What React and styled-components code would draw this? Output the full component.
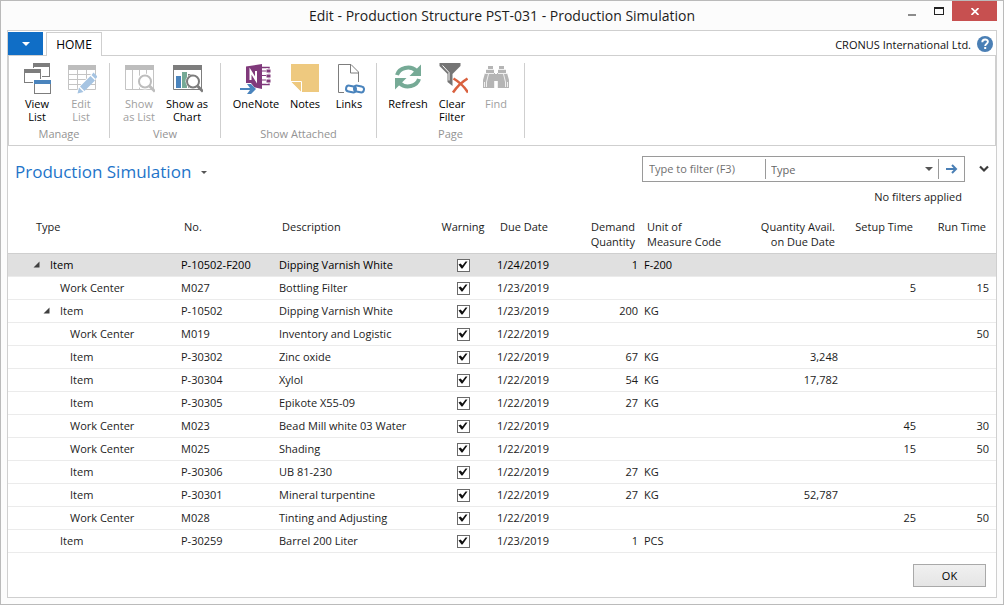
import React from "react";
import styled, { createGlobalStyle } from "styled-components";

const GlobalStyle = createGlobalStyle`
  * { box-sizing: border-box; }
  body {
    margin: 0;
    background: #fcfcfc;
    color: #1c1c1c;
    font: 11px/15px "Open Sans", "Noto Sans", sans-serif;
  }
  button, input, select { font: inherit; color: inherit; margin: 0; }
`;

const Window = styled.div`
  min-height: 100vh;
  display: flex;
  flex-direction: column;
  padding: 0 6px 6px;
  border: 1px solid #bababa;
`;

const TitleBar = styled.header`
  display: grid;
  grid-template-columns: 1fr auto 1fr;
  height: 29px;
  flex: none;
`;

const WindowTitle = styled.h1`
  grid-column: 2;
  margin: 0;
  font-size: 14px;
  line-height: 29px;
  font-weight: 400;
`;

const WindowControls = styled.div`
  display: flex;
  justify-content: flex-end;
  align-items: flex-start;
`;

const ControlButton = styled.button`
  width: ${(p) => (p.$close ? 45 : 27)}px;
  height: 20px;
  padding: 0;
  border: 0;
  display: grid;
  place-items: center;
  background: ${(p) => (p.$close ? "#c75050" : "transparent")};
`;

const Pane = styled.div`
  flex: 1;
  display: flex;
  flex-direction: column;
  border: 1px solid #cfcfcf;
  background: #fff;
`;

const TabBar = styled.nav`
  display: flex;
  align-items: stretch;
  height: 24px;
  padding-top: 1px;
`;

const AppMenuButton = styled.button`
  width: 35px;
  height: 23px;
  padding: 0;
  border: 0;
  display: grid;
  place-items: center;
  background: #106ec6;
`;

const Tab = styled.button`
  width: 56px;
  margin: 0 0 -1px 3px;
  padding: 0;
  border: 1px solid #cfcfcf;
  border-bottom: 0;
  background: #fff;
  color: #000;
  font-size: 12px;
  z-index: 1;
`;

const Company = styled.div`
  margin-left: auto;
  padding: 1px 3px 0 0;
  display: flex;
  align-items: center;
  gap: 6px;
  color: #111;
`;

const HelpButton = styled.button`
  padding: 0;
  border: 0;
  background: none;
  display: grid;
`;

const Ribbon = styled.div`
  display: flex;
  height: 91px;
  padding: 7px 0;
  border: 1px solid #cfcfcf;
`;

const RibbonGroup = styled.section`
  width: ${(p) => p.$width}px;
  display: flex;
  flex-direction: column;
  justify-content: space-between;
  border-right: 1px solid #cfcfcf;
`;

const GroupButtons = styled.div`
  display: flex;
  padding-left: ${(p) => p.$start}px;
`;

const GroupLabel = styled.div`
  text-align: center;
  line-height: 8px;
  color: #939393;
`;

const RibbonButton = styled.button`
  width: ${(p) => p.$width}px;
  padding: 0;
  border: 0;
  background: none;
  display: flex;
  flex-direction: column;
  align-items: center;
  gap: 2px;
  line-height: 13px;
  white-space: pre;
  color: #000;
  &:disabled { color: #a0a0a0; }
`;

const PageHeader = styled.div`
  display: flex;
  justify-content: space-between;
  align-items: flex-start;
  padding: 10px 7px 0;
`;

const PageTitle = styled.h2`
  margin: 0;
  display: flex;
  align-items: center;
  gap: 8px;
  font-size: 17px;
  line-height: 32px;
  font-weight: 400;
  color: #1e74c9;
`;

const IconButton = styled.button`
  padding: 0;
  border: 0;
  background: none;
  display: grid;
  place-items: center;
  height: ${(p) => p.$height || 20}px;
  width: ${(p) => p.$width || 10}px;
`;

const FilterRow = styled.div`
  display: flex;
  align-items: center;
  gap: 14px;
`;

const FilterBox = styled.form`
  display: flex;
  align-items: center;
  width: 323px;
  height: 26px;
  border: 1px solid #9a9a9a;
  background: #fff;
`;

const FilterInput = styled.input`
  width: 122px;
  height: 22px;
  padding: 0 6px 2px;
  border: 0;
  outline: 0;
  background: none;
  &::placeholder { color: #707070; opacity: 1; }
`;

const FieldWrap = styled.label`
  flex: 1;
  display: flex;
  align-items: center;
  height: 20px;
  padding-right: 5px;
  border: solid #9a9a9a;
  border-width: 0 1px;
`;

const FieldSelect = styled.select`
  flex: 1;
  appearance: none;
  border: 0;
  outline: 0;
  padding: 0 5px;
  background: none;
  color: #666;
`;

const FilterStatus = styled.div`
  padding: 7px 27px 0 0;
  text-align: right;
`;

const Table = styled.table`
  width: 100%;
  margin-top: 15px;
  table-layout: fixed;
  border-collapse: separate;
  border-spacing: 0;
`;

const Col = styled.col`
  width: ${(p) => p.$width}px;
`;

const HeadCell = styled.th`
  height: 35px;
  padding: 0 6px 3px ${(p) => p.$left || 6}px;
  vertical-align: top;
  border-bottom: 1px solid #cfcfcf;
  font-weight: 400;
  text-align: ${(p) => p.$align || "left"};
  white-space: pre;
`;

const Row = styled.tr`
  background: ${(p) => (p.$selected ? "#e0e0e0" : "#fff")};
  color: ${(p) => (p.$selected ? "#000" : "#1c1c1c")};
`;

const Cell = styled.td`
  height: 23px;
  padding: 0 3px ${(p) => (p.$control ? 0 : 2)}px;
  border-bottom: 1px solid #ebebeb;
  text-align: ${(p) => p.$align || "left"};
  white-space: nowrap;
`;

const TypeCell = styled.div`
  display: flex;
  align-items: center;
  gap: 9px;
  padding-left: ${(p) => p.$level * 10 + 20}px;
`;

const TreeSlot = styled.span`
  width: 10px;
  flex: none;
  padding-top: 1px;
`;

const CheckBox = styled.input`
  appearance: none;
  display: block;
  width: 13px;
  height: 13px;
  margin: 0 auto;
  border: 1px solid #6a6a6a;
  background: #fff;
  &:checked::before {
    content: "";
    display: block;
    width: 11px;
    height: 11px;
    background: #111;
    clip-path: polygon(1px 5px, 3px 4px, 5px 6px, 8px 2px, 10px 2px, 5px 9px, 4px 9px);
  }
`;

const Footer = styled.footer`
  display: flex;
  justify-content: flex-end;
  margin-top: auto;
  padding: 10px;
`;

const OkButton = styled.button`
  width: 73px;
  height: 23px;
  padding: 0;
  border: 1px solid #a9a9a9;
  background: linear-gradient(#f0f0f0, #e5e5e5);
  color: #000;
`;

const Caret = ({ size = 8, color = "#555" }) => (
  <svg width={size} height={size / 2} viewBox="0 0 8 4">
    <path d="M0 0h8L4 4z" fill={color} />
  </svg>
);

const TreeMark = () => (
  <svg width="7" height="7" viewBox="0 0 7 7">
    <path d="M6.5 .5v6h-6z" fill="#404040" />
  </svg>
);

const Icon = ({ children }) => (
  <svg width="32" height="32" viewBox="0 0 32 32" fill="none">
    {children}
  </svg>
);

const MiniWindow = ({ x, y, color }) => (
  <>
    <rect x={x} y={y} width="18" height="14" fill="#fff" />
    <rect x={x + 0.5} y={y + 0.5} width="16" height="13" fill="#fff" stroke="#7d7d7d" />
    <rect x={x} y={y} width="17" height="4" fill={color} />
  </>
);

const icons = {
  viewList: (
    <Icon>
      <MiniWindow x={12} y={0} color="#7d7d7d" />
      <rect x="2" y="5" width="19" height="16" fill="#fff" />
      <MiniWindow x={3} y={6} color="#7d7d7d" />
      <rect x="12" y="16" width="19" height="16" fill="#fff" />
      <MiniWindow x={13} y={17} color="#4a84bd" />
    </Icon>
  ),
  editList: (
    <Icon>
      <path d="M3.500 6v20.500h27V6M4 11.500h26M4 16.500h26M4 21.500h26M12.500 6v20M21.500 6v20" stroke="#c4c4c4" />
      <rect x="3" y="2" width="28" height="5" fill="#bdbdbd" />
      <path d="M12 31l1-6.500L27.500 9.500l5 5L18 29z" fill="#fff" />
      <path d="M12.500 30.500l1.500-6 4.500 4.500zM15 23.500L25.500 13l4.500 4.500L19.500 28zM26.500 12l2-2.500 4 4L30.500 16z" fill="#a6c4e2" />
    </Icon>
  ),
  showList: (
    <Icon>
      <path d="M2.500 6v20.500h28V6M9.500 6v20M16.500 6v20M23.500 6v20" stroke="#c4c4c4" />
      <rect x="2" y="2" width="29" height="5" fill="#bdbdbd" />
      <circle cx="22" cy="18.500" r="8" fill="#fff" />
      <circle cx="22" cy="18.500" r="6" fill="#fff" stroke="#bdbdbd" strokeWidth="2" />
      <path d="M26.500 23l5.500 5.500" stroke="#bdbdbd" strokeWidth="3" />
    </Icon>
  ),
  showChart: (
    <Icon>
      <path d="M2.500 6v20.500h28V6" stroke="#7d7d7d" />
      <rect x="2" y="2" width="29" height="5" fill="#7d7d7d" />
      <rect x="5" y="13" width="5" height="12" fill="#4a84bd" />
      <rect x="11" y="9" width="5" height="16" fill="#76aa96" />
      <rect x="17" y="11" width="5" height="14" fill="#7d7d7d" />
      <circle cx="22" cy="18.500" r="7.500" fill="#fff" />
      <circle cx="22" cy="18.500" r="6" fill="#fff" stroke="#7d7d7d" strokeWidth="2" />
      <path d="M26.500 23l5.500 5.500" stroke="#7d7d7d" strokeWidth="3" />
    </Icon>
  ),
  oneNote: (
    <Icon>
      <path d="M22 4.500h7v17h-7" stroke="#80397b" strokeWidth="1.500" />
      <path d="M26 6h5v4h-5zM26 11h5v4h-5zM26 16h5v4h-5z" fill="#80397b" stroke="#fff" />
      <path d="M22 8h4M22 12.500h4M22 17h4" stroke="#80397b" />
      <path d="M6 3.500L22 1v25L6 22.500z" fill="#80397b" />
      <path d="M10.500 17V8l5.500 9V8" stroke="#fff" strokeWidth="2" />
      <path d="M-1 23h7v-3h5l5 6.500L10 33H6v-3h-7z" fill="#fff" />
      <path d="M0 25h10l-3-4h4l5 5-5 5H7l3-4H0z" fill="#4a84bd" />
    </Icon>
  ),
  notes: (
    <Icon>
      <path d="M2 1h28v28H13L2 18z" fill="#eec97f" />
      <path d="M2.500 19h9.500v9.500z" fill="#eec97f" />
      <path d="M2 18.500h10.500V29" stroke="#fff" />
      <path d="M2 20v9h9z" fill="#fff" />
    </Icon>
  ),
  links: (
    <Icon>
      <path d="M12 29.500H5.500v-28H18l7.500 7.500v10M17.500 2v8H25" stroke="#7d7d7d" />
      <path d="M11 20h22v11H11z" fill="#fff" />
      <g stroke="#4a84bd" strokeWidth="2">
        <rect x="13" y="23" width="10" height="6" rx="3" transform="rotate(12 18 26)" />
        <rect x="21" y="23" width="10" height="6" rx="3" transform="rotate(12 26 26)" />
      </g>
    </Icon>
  ),
  refresh: (
    <Icon>
      <path d="M5 12C7 5 18 1.500 24.500 8" stroke="#76aa96" strokeWidth="4" />
      <path d="M29 1.500V13H17.500z" fill="#76aa96" />
      <path d="M27 16c-2 7-13 10.500-19.500 4" stroke="#76aa96" strokeWidth="4" />
      <path d="M3 26.500V15h11.500z" fill="#76aa96" />
    </Icon>
  ),
  clearFilter: (
    <Icon>
      <path d="M3.500 0h21v3l-8 8v12l-5-4v-8l-8-8z" fill="#757575" />
      <path d="M6.500 2.500l6.500 7v8" stroke="#fff" />
      <path d="M19 15l15 15M33.500 15L17 30.500" stroke="#fff" strokeWidth="5" />
      <path d="M17.500 15.500c5 3 11 8.500 14.500 14M31.500 15.500c-5 3-10.500 8-14.500 14" stroke="#d9613f" strokeWidth="2.500" />
    </Icon>
  ),
  find: (
    <Icon>
      <g fill="#b5b5b5">
        <path d="M8 3h5v3h1v4h1v15H3v-8l2-7h1V6h2z" />
        <path d="M19 3h5v3h2v4h1l2 7v8H17V10h1V6h1z" />
        <path d="M14 11h4v7h-4z" />
      </g>
      <path d="M6 6.500h8M18 6.500h8M5 10.500h9M18 10.500h9M14.500 18v7M17.500 18v7M4.500 19v5M27.500 19v5M8.500 11l-2 8v5M23.500 11l2 8v5" stroke="#fff" strokeWidth=".8" />
    </Icon>
  ),
};

const ribbonGroups = [
  {
    label: "Manage", width: 101, start: 6,
    buttons: [["View\nList", "viewList", 44], ["Edit\nList", "editList", 44, true]],
  },
  {
    label: "View", width: 111, start: 5,
    buttons: [["Show\nas List", "showList", 48, true], ["Show as\nChart", "showChart", 48]],
  },
  {
    label: "Show Attached", width: 156, start: 8,
    buttons: [["OneNote", "oneNote", 54], ["Notes", "notes", 44], ["Links", "links", 44]],
  },
  {
    label: "Page", width: 148, start: 9,
    buttons: [["Refresh", "refresh", 44], ["Clear\nFilter", "clearFilter", 44], ["Find", "find", 44, true]],
  },
];

const columns = [
  { title: "Type", width: 170, left: 28 },
  { title: "No.", width: 98 },
  { title: "Description" },
  { title: "Warning", width: 62, align: "center" },
  { title: "Due Date", width: 77 },
  { title: "Demand\nQuantity", width: 70, align: "right" },
  { title: "Unit of\nMeasure Code", width: 100 },
  { title: "Quantity Avail.\non Due Date", width: 100, align: "right" },
  { title: "Setup Time", width: 78, align: "right" },
  { title: "Run Time", width: 73, align: "right" },
];

const rows = [
  [0, "Item", "P-10502-F200", "Dipping Varnish White", "1/24/2019", "1", "F-200", "", "", "", true],
  [1, "Work Center", "M027", "Bottling Filter", "1/23/2019", "", "", "", "5", "15"],
  [1, "Item", "P-10502", "Dipping Varnish White", "1/23/2019", "200", "KG", "", "", "", true],
  [2, "Work Center", "M019", "Inventory and Logistic", "1/22/2019", "", "", "", "", "50"],
  [2, "Item", "P-30302", "Zinc oxide", "1/22/2019", "67", "KG", "3,248", "", ""],
  [2, "Item", "P-30304", "Xylol", "1/22/2019", "54", "KG", "17,782", "", ""],
  [2, "Item", "P-30305", "Epikote X55-09", "1/22/2019", "27", "KG", "", "", ""],
  [2, "Work Center", "M023", "Bead Mill white 03 Water", "1/22/2019", "", "", "", "45", "30"],
  [2, "Work Center", "M025", "Shading", "1/22/2019", "", "", "", "15", "50"],
  [2, "Item", "P-30306", "UB 81-230", "1/22/2019", "27", "KG", "", "", ""],
  [2, "Item", "P-30301", "Mineral turpentine", "1/22/2019", "27", "KG", "52,787", "", ""],
  [2, "Work Center", "M028", "Tinting and Adjusting", "1/22/2019", "", "", "", "25", "50"],
  [1, "Item", "P-30259", "Barrel 200 Liter", "1/23/2019", "1", "PCS", "", "", ""],
];

export default function App() {
  return (
    <Window>
      <GlobalStyle />
      <TitleBar>
        <WindowTitle>Edit - Production Structure PST-031 - Production Simulation</WindowTitle>
        <WindowControls>
          <ControlButton aria-label="Minimize">
            <svg width="8" height="16" viewBox="0 0 8 16"><path d="M0 11h8v2H0z" fill="#8c8c8c" /></svg>
          </ControlButton>
          <ControlButton aria-label="Maximize">
            <svg width="10" height="8" viewBox="0 0 10 8">
              <path d="M0 0h10v8H0zM1 2v5h8V2z" fill="#222" fillRule="evenodd" />
            </svg>
          </ControlButton>
          <ControlButton $close aria-label="Close">
            <svg width="8" height="7" viewBox="0 0 8 7"><path d="M.5 0l7 7M7.500 0l-7 7" stroke="#fff" strokeWidth="1.700" /></svg>
          </ControlButton>
        </WindowControls>
      </TitleBar>

      <Pane>
        <TabBar>
          <AppMenuButton aria-label="Application menu"><Caret color="#fff" /></AppMenuButton>
          <Tab>HOME</Tab>
          <Company>
            CRONUS International Ltd.
            <HelpButton aria-label="Help">
              <svg width="16" height="16" viewBox="0 0 16 16" fill="none">
                <circle cx="8" cy="8" r="8" fill="#4a7fb5" />
                <path d="M5.300 6.200c0-3.600 5.600-3.400 5.600-.4 0 1.900-2.700 1.900-2.700 4.200" stroke="#fff" strokeWidth="1.900" />
                <rect x="7.200" y="11" width="2" height="2" fill="#fff" />
              </svg>
            </HelpButton>
          </Company>
        </TabBar>

        <Ribbon>
          {ribbonGroups.map((group) => (
            <RibbonGroup key={group.label} $width={group.width}>
              <GroupButtons $start={group.start}>
                {group.buttons.map(([label, icon, width, disabled]) => (
                  <RibbonButton key={label} $width={width} disabled={disabled}>
                    {icons[icon]}
                    {label}
                  </RibbonButton>
                ))}
              </GroupButtons>
              <GroupLabel>{group.label}</GroupLabel>
            </RibbonGroup>
          ))}
        </Ribbon>

        <PageHeader>
          <PageTitle>
            Production Simulation
            <IconButton aria-label="Page menu"><Caret size={6} /></IconButton>
          </PageTitle>
          <div>
            <FilterRow>
              <FilterBox onSubmit={(e) => e.preventDefault()}>
                <FilterInput placeholder="Type to filter (F3)" aria-label="Type to filter" />
                <FieldWrap>
                  <FieldSelect aria-label="Filter field" defaultValue="Type">
                    <option>Type</option>
                    <option>No.</option>
                    <option>Description</option>
                  </FieldSelect>
                  <Caret />
                </FieldWrap>
                <IconButton $width={25} aria-label="Apply filter">
                  <svg width="12" height="10" viewBox="0 0 12 10" fill="none">
                    <path d="M0 5h10M6 1l4 4-4 4" stroke="#4a7fb5" strokeWidth="2" />
                  </svg>
                </IconButton>
              </FilterBox>
              <IconButton aria-label="Expand filter pane">
                <svg width="10" height="8" viewBox="0 0 10 8" fill="none">
                  <path d="M1 1.500l4 4 4-4" stroke="#3c3c3c" strokeWidth="2.200" />
                </svg>
              </IconButton>
            </FilterRow>
            <FilterStatus>No filters applied</FilterStatus>
          </div>
        </PageHeader>

        <Table>
          <colgroup>
            {columns.map((c) => (c.width ? <Col key={c.title} $width={c.width} /> : <col key={c.title} />))}
            <Col $width={4} />
          </colgroup>
          <thead>
            <tr>
              {columns.map((c) => (
                <HeadCell key={c.title} scope="col" $align={c.align} $left={c.left}>{c.title}</HeadCell>
              ))}
              <HeadCell as="td" />
            </tr>
          </thead>
          <tbody>
            {rows.map(([level, type, no, description, due, demand, unit, avail, setup, run, open], i) => (
              <Row key={no} $selected={i === 0}>
                <Cell>
                  <TypeCell $level={level}>
                    <TreeSlot>
                      {open && <IconButton $height={12} aria-label={`Collapse ${no}`}><TreeMark /></IconButton>}
                    </TreeSlot>
                    {type}
                  </TypeCell>
                </Cell>
                <Cell>{no}</Cell>
                <Cell>{description}</Cell>
                <Cell $control><CheckBox type="checkbox" defaultChecked aria-label={`Warning ${no}`} /></Cell>
                <Cell>{due}</Cell>
                <Cell $align="right">{demand}</Cell>
                <Cell>{unit}</Cell>
                <Cell $align="right">{avail}</Cell>
                <Cell $align="right">{setup}</Cell>
                <Cell $align="right">{run}</Cell>
                <Cell />
              </Row>
            ))}
          </tbody>
        </Table>

        <Footer>
          <OkButton>OK</OkButton>
        </Footer>
      </Pane>
    </Window>
  );
}
